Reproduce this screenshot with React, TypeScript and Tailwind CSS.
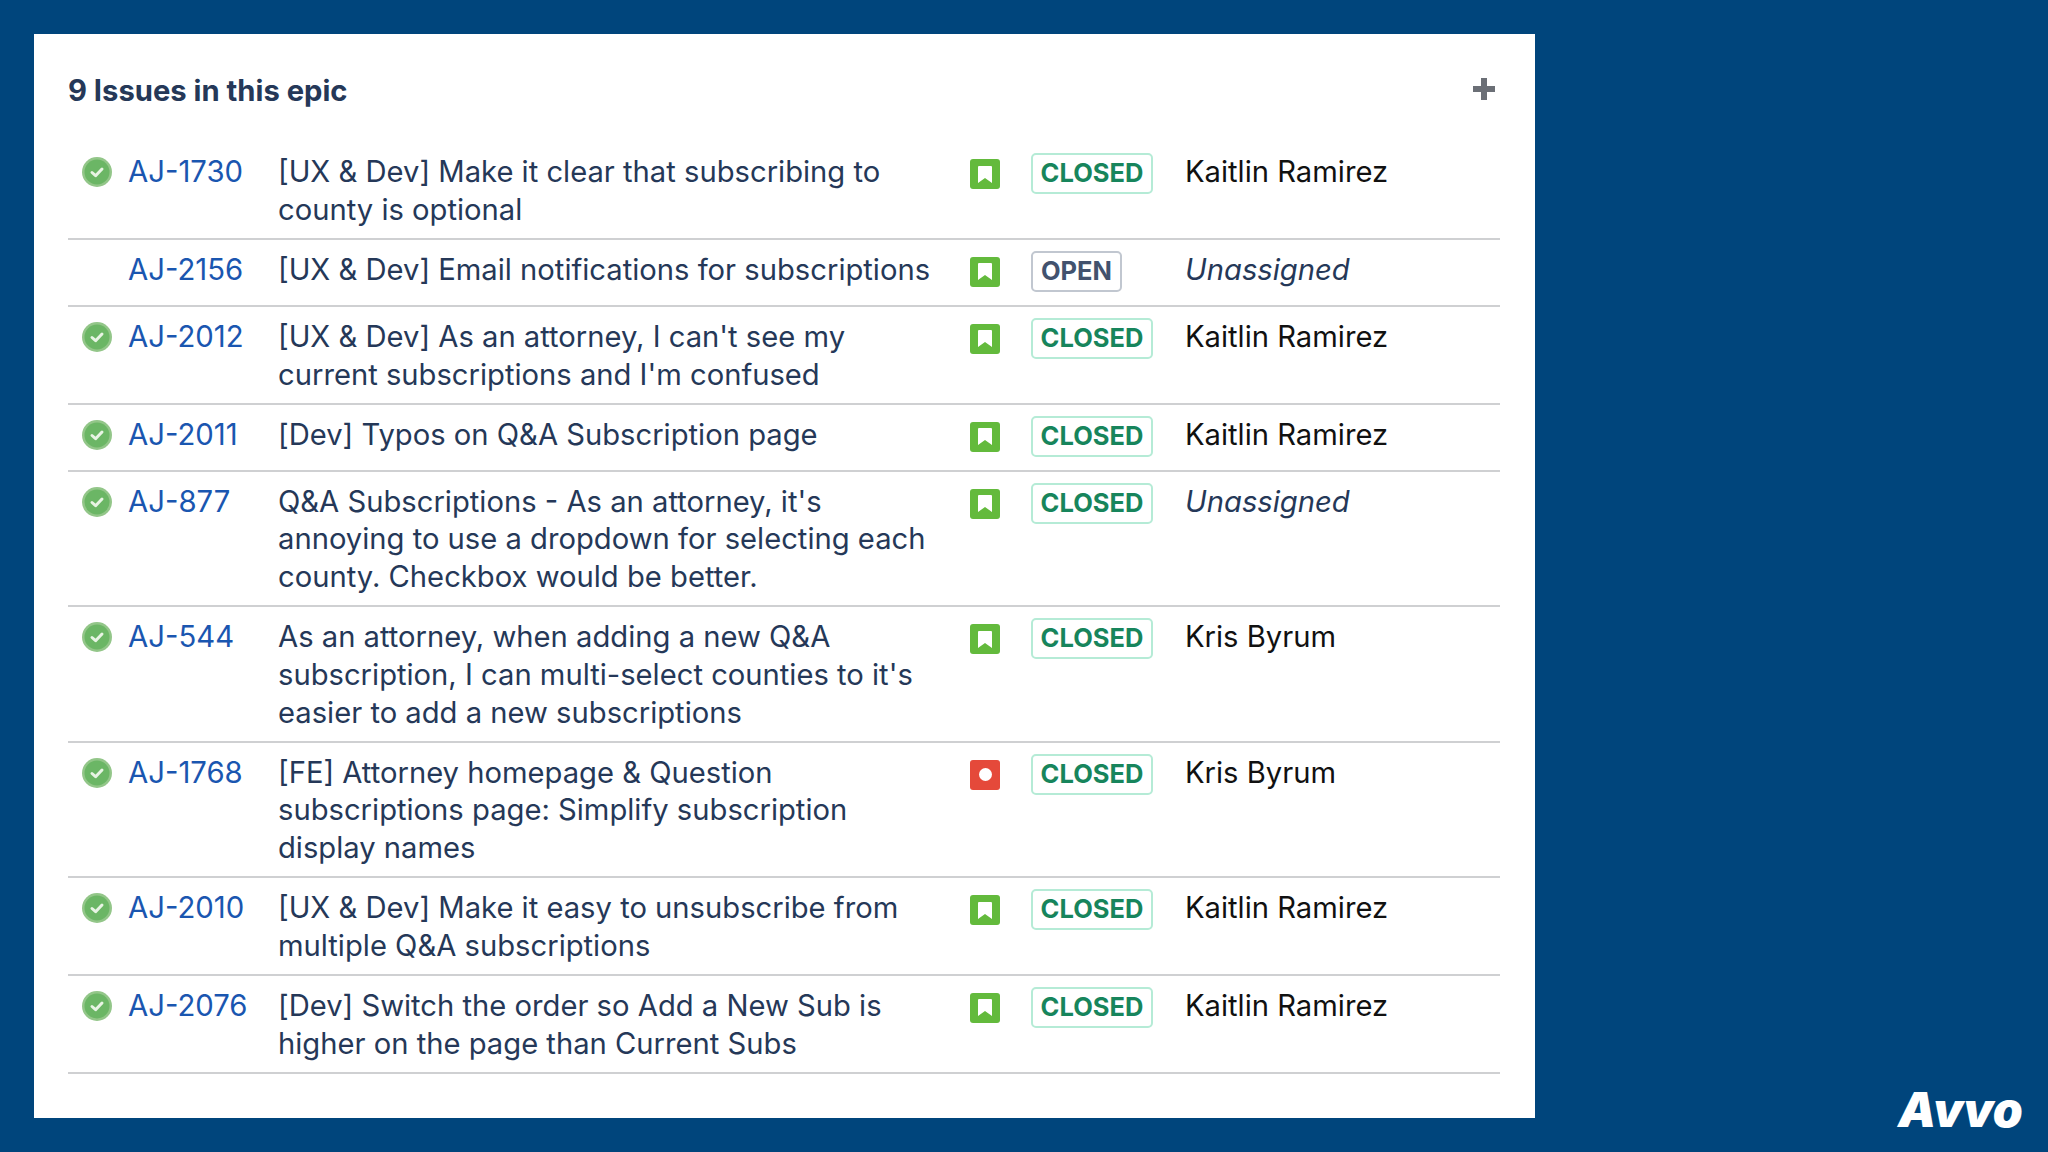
const issues = [
  { key: "AJ-1730", done: true, type: "story", status: "CLOSED", who: "Kaitlin Ramirez", lines: ["[UX & Dev] Make it clear that subscribing to", "county is optional"] },
  { key: "AJ-2156", done: false, type: "story", status: "OPEN", who: "Unassigned", lines: ["[UX & Dev] Email notifications for subscriptions"] },
  { key: "AJ-2012", done: true, type: "story", status: "CLOSED", who: "Kaitlin Ramirez", lines: ["[UX & Dev] As an attorney, I can't see my", "current subscriptions and I'm confused"] },
  { key: "AJ-2011", done: true, type: "story", status: "CLOSED", who: "Kaitlin Ramirez", lines: ["[Dev] Typos on Q&A Subscription page"] },
  { key: "AJ-877", done: true, type: "story", status: "CLOSED", who: "Unassigned", lines: ["Q&A Subscriptions - As an attorney, it's", "annoying to use a dropdown for selecting each", "county. Checkbox would be better."] },
  { key: "AJ-544", done: true, type: "story", status: "CLOSED", who: "Kris Byrum", lines: ["As an attorney, when adding a new Q&A", "subscription, I can multi-select counties to it's", "easier to add a new subscriptions"] },
  { key: "AJ-1768", done: true, type: "bug", status: "CLOSED", who: "Kris Byrum", lines: ["[FE] Attorney homepage & Question", "subscriptions page: Simplify subscription", "display names"] },
  { key: "AJ-2010", done: true, type: "story", status: "CLOSED", who: "Kaitlin Ramirez", lines: ["[UX & Dev] Make it easy to unsubscribe from", "multiple Q&A subscriptions"] },
  { key: "AJ-2076", done: true, type: "story", status: "CLOSED", who: "Kaitlin Ramirez", lines: ["[Dev] Switch the order so Add a New Sub is", "higher on the page than Current Subs"] },
];

function DoneIcon() {
  return (
    <svg width="30" height="30" viewBox="0 0 30 30">
      <circle cx="15" cy="15" r="15" fill="#93c689" />
      <circle cx="15" cy="15" r="12.5" fill="#6bb665" />
      <path d="M10 15.5l3.6 3.2 6.4-6.7" fill="none" stroke="#e8f4e4" strokeWidth="3" strokeLinecap="round" strokeLinejoin="round" />
    </svg>
  );
}

function TypeIcon({ type }: { type: string }) {
  if (type === "bug") {
    return (
      <div className="flex h-[30px] w-[30px] items-center justify-center rounded-[3px] bg-[#e5493a]">
        <div className="h-[13px] w-[13px] rounded-full bg-white" />
      </div>
    );
  }
  return (
    <div className="flex h-[30px] w-[30px] items-center justify-center rounded-[3px] bg-[#63ba3c]">
      <svg width="14" height="17" viewBox="0 0 14 17">
        <path d="M1 0h12a1 1 0 0 1 1 1v16l-7-5-7 5V1a1 1 0 0 1 1-1z" fill="#fff" />
      </svg>
    </div>
  );
}

function StatusBadge({ status }: { status: string }) {
  const open = status === "OPEN";
  return (
    <span
      className={
        open
          ? "flex h-[41px] w-[91px] items-center justify-center rounded-[5px] border-2 border-[#c1c7d0] text-[25.5px] font-bold text-[#42526e]"
          : "flex h-[41px] w-[122px] items-center justify-center rounded-[5px] border-2 border-[#b5ebd6] text-[25.5px] font-bold text-[#17855c]"
      }
    >
      {status}
    </span>
  );
}

export default function App() {
  return (
    <div className="flex h-[1152px] w-[2048px] items-start overflow-hidden bg-[#00457c] pl-[34px] pt-[34px] font-['Inter',sans-serif]">
      <div className="h-[1084px] w-[1501px] shrink-0 bg-white px-[34px] pt-[34px]">
        <div className="flex h-[74px] items-start justify-between">
          <h2 className="pt-[1px] text-[29.2px] leading-[44px] font-bold text-[#253858]">9 Issues in this epic</h2>
          <svg className="mr-[5px] mt-[9px]" width="24" height="24" viewBox="0 0 24 24">
            <path d="M12 1v22M1 12h22" stroke="#6b6f76" strokeWidth="6" />
          </svg>
        </div>
        <div className="w-[1432px]">
          {issues.map((it) => (
            <div key={it.key} className="flex border-b-2 border-[#cfd0d2] pt-[11px]">
              <div className="w-[14px] shrink-0" />
              <div className="w-[30px] shrink-0 pt-[4px]">{it.done ? <DoneIcon /> : null}</div>
              <div className="w-[166px] shrink-0 pl-[16px] text-[29.3px] leading-[37.7px] text-[#1a56b0]">{it.key}</div>
              <div className="w-[692px] shrink-0 pb-[9.4px] text-[29.2px] leading-[37.7px] text-[#253858]">
                {it.lines.map((l) => (
                  <div key={l} className="whitespace-nowrap">{l}</div>
                ))}
              </div>
              <div className="w-[61px] shrink-0 pt-[6px]">
                <TypeIcon type={it.type} />
              </div>
              <div className="w-[154px] shrink-0 pb-[13px]">
                <StatusBadge status={it.status} />
              </div>
              <div
                className={
                  it.who === "Unassigned"
                    ? "flex-1 text-[29.2px] leading-[37.7px] italic text-[#253858]"
                    : "flex-1 text-[29.2px] leading-[37.7px] text-[#111]"
                }
              >
                {it.who}
              </div>
            </div>
          ))}
        </div>
      </div>
      <div className="ml-[363px] mt-[1046px] text-[48px] leading-[60px] font-black italic text-white">Avvo</div>
    </div>
  );
}
